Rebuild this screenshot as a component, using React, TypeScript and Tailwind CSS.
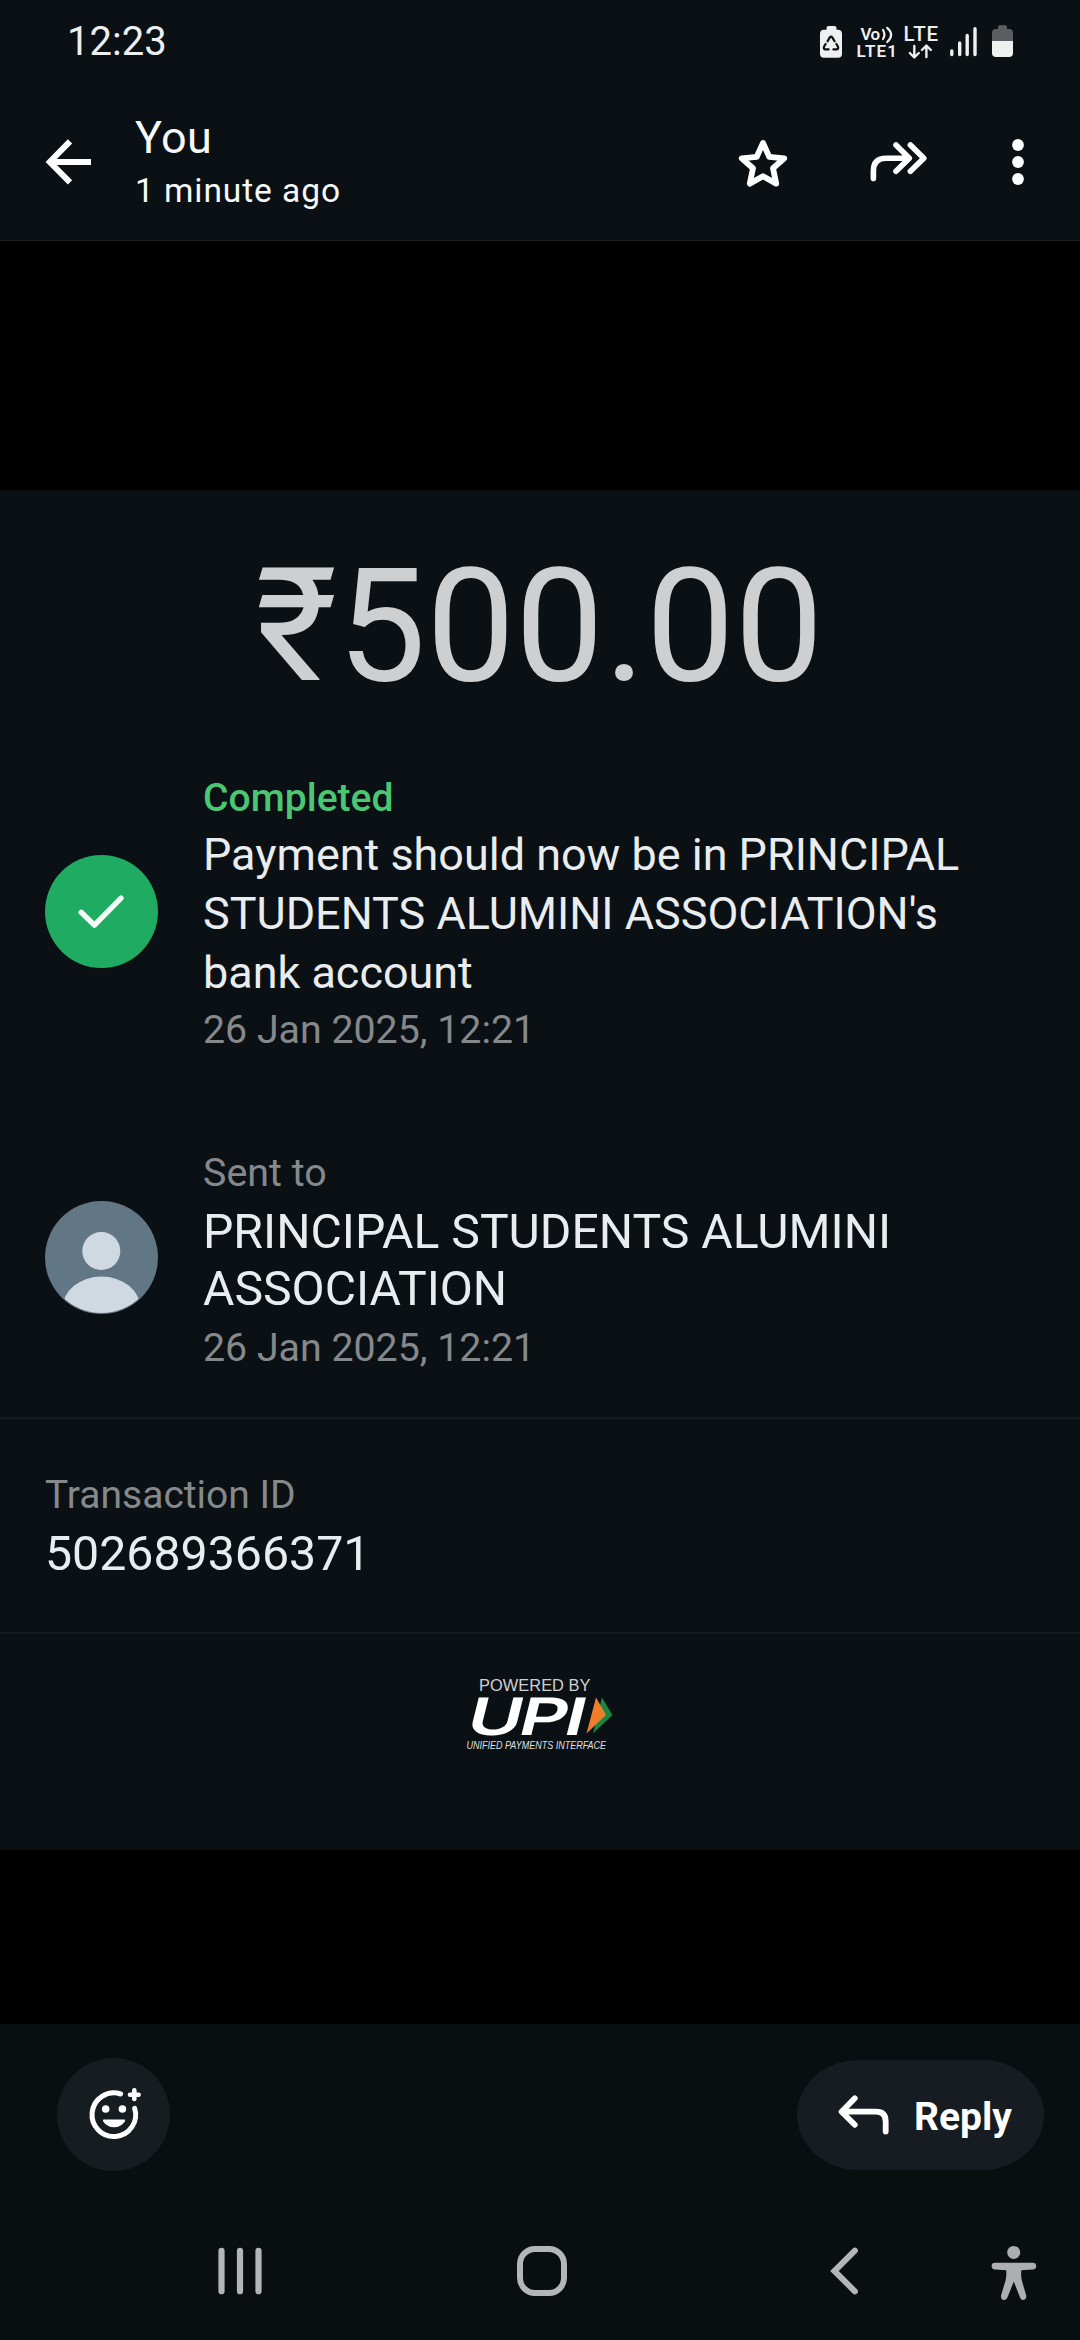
import React from "react";

function StatusIcons() {
  return (
    <svg className="h-[44px] w-[204px]" viewBox="816 20 204 44" fill="none" strokeLinecap="round" strokeLinejoin="round">
      {/* battery protection */}
      <rect x="826.5" y="26" width="10" height="8" rx="2" fill="#eeefef" />
      <rect x="820" y="29.7" width="22" height="28" rx="4" fill="#eeefef" />
      <g stroke="#0b1014" strokeWidth="2.2">
        <path d="M827.6 41.2L829.6 37.6Q831 35.6 832.4 37.6L834.6 41.2" />
        <path d="M825.6 44L824 46.8Q823.2 49.2 825.6 49.4H828.6" />
        <path d="M836.4 44L838 46.8Q838.8 49.2 836.4 49.4H833.4" />
      </g>
      {/* network labels */}
      <g fill="#eeefef" fontFamily="Roboto, sans-serif">
        <text x="860.5" y="39.7" fontSize="17" fontWeight="600" textLength="19.5">Vo</text>
        <text x="856.5" y="57" fontSize="17" fontWeight="600" textLength="40.5">LTE1</text>
        <text x="903.6" y="40.6" fontSize="20.4" fontWeight="500" textLength="34.5">LTE</text>
      </g>
      <g stroke="#eeefef" strokeWidth="2.2">
        <path d="M883 30Q885.8 34.5 883 39" />
        <path d="M887.2 27.8Q895 34.5 887.2 42" />
        <path d="M914.3 46V57M909.8 53L914.3 57.4L918.8 53" strokeWidth="2.4" />
        <path d="M926.4 57V46.4M921.9 50L926.4 45.6L930.9 50" strokeWidth="2.4" />
      </g>
      <g stroke="#eeefef" strokeWidth="3.4">
        <path d="M951.8 51V54.6M959.7 43V54.6M967.2 35.4V54.6M975 28.8V54.6" />
      </g>
      {/* battery level */}
      <path d="M998 29V27Q998 25.3 999.7 25.3H1005.3Q1007 25.3 1007 27V29H1009Q1013 29 1013 33V41H992V33Q992 29 996 29Z" fill="#5b5e60" />
      <path d="M992 41H1013V53Q1013 57 1009 57H996Q992 57 992 53Z" fill="#eeefef" />
    </svg>
  );
}

function Header() {
  return (
    <header className="flex h-[159px] items-start border-b border-[#1c2226]">
      <svg className="mt-[50px] ml-10 h-[60px] w-14" viewBox="40 132 56 60" fill="none" stroke="#fff" strokeWidth="6">
        <path d="M91 162H50M70 141.3L49.8 162L70 182.4" />
      </svg>
      <div className="mt-[30px] ml-[39px] flex w-[599px] flex-col gap-[7px] whitespace-nowrap text-[#f7f8fa]">
        <div className="text-[45px] leading-[52px] tracking-[0.4px]">You</div>
        <div className="text-[33.5px] leading-10 tracking-[0.93px]">1 minute ago</div>
      </div>
      <svg className="mt-[50px] h-[60px] w-[58px]" viewBox="734 132 58 60" fill="none" stroke="#fff" strokeWidth="5.8" strokeLinecap="round" strokeLinejoin="round">
        <path d="M763 143L769.2 156.8L784.3 158.3L773 168.2L776.2 183.6L763 176.2L749.8 183.6L753 168.2L741.7 158.3L756.8 156.8Z" />
      </svg>
      <svg className="mt-[50px] ml-[76px] h-[60px] w-[62px]" viewBox="868 132 62 60" fill="none" stroke="#fff" strokeWidth="5.6" strokeLinecap="round" strokeLinejoin="round">
        <path d="M873.4 178.4V171Q873.4 158.3 886 158.3H908M896 145L909.3 158.3L896 171.3M910.4 145L923.8 158.3L910.4 171.3" />
      </svg>
      <svg className="mt-[50px] ml-[78px] h-[60px] w-5" viewBox="1008 132 20 60" fill="#fff">
        <circle cx="1018" cy="145" r="5.9" />
        <circle cx="1018" cy="162" r="5.9" />
        <circle cx="1018" cy="179" r="5.9" />
      </svg>
    </header>
  );
}

function UpiLogo() {
  return (
    <svg className="mt-9 ml-[450px] h-[90px] w-50" viewBox="450 1670 200 90" fontFamily="'Liberation Sans', Arial, sans-serif">
      <text x="479" y="1691.3" fontSize="16.4" fill="#cfd1d3" textLength="111.5">POWERED BY</text>
      <g transform="translate(469 1735) skewX(-14) scale(1.46 1)">
        <text x="-3.5" y="0" fontFamily="Inter, sans-serif" fontSize="51.5" fontWeight="600" fill="#fff" textLength="81" lengthAdjust="spacing">UPI</text>
      </g>
      <path d="M602 1697.5L612.5 1715L593 1733.5Z" fill="#1c8541" />
      <path d="M596 1697.5L606 1715L586.5 1733.5Z" fill="#ef7d2c" />
      <text x="466.5" y="1749" fontSize="11" fontStyle="italic" fontWeight="400" fill="#dfe1e3" textLength="139.5" lengthAdjust="spacingAndGlyphs">UNIFIED PAYMENTS INTERFACE</text>
    </svg>
  );
}

function Receipt() {
  return (
    <section className="h-[1360px] overflow-hidden bg-[#0b1014] whitespace-nowrap text-[#e9edef]">
      <div className="mt-14 pr-px text-center text-[158.2px] leading-[160px] text-[#cdcfd1]">₹500.00</div>

      <div className="mt-[67px] flex items-start pl-[45px]">
        <svg className="mt-[81.5px] h-[113px] w-[113px]" viewBox="45 854.5 113 113" fill="none">
          <circle cx="101.5" cy="911" r="56.5" fill="#1fab61" />
          <path d="M81.2 911.8L94.4 924.6L121 897.6" stroke="#f2fbf6" strokeWidth="5.4" strokeLinecap="round" strokeLinejoin="round" />
        </svg>
        <div className="ml-[45px]">
          <div className="text-[39.1px] leading-[50px] font-medium text-[#4bc773]">Completed</div>
          <div className="mt-[1.6px] text-[44.95px] leading-[59.3px]">
            Payment should now be in PRINCIPAL
            <br />
            STUDENTS ALUMINI ASSOCIATION's
            <br />
            bank account
          </div>
          <div className="mt-[2.5px] text-[39.3px] leading-[50px] text-[#85898c]">26 Jan 2025, 12:21</div>
        </div>
      </div>

      <div className="mt-[93px] flex items-start pl-[45px]">
        <svg className="mt-[53px] h-[113px] w-[113px]" viewBox="0 0 113 113">
          <defs>
            <clipPath id="avatar">
              <circle cx="56.5" cy="56.5" r="55.5" />
            </clipPath>
          </defs>
          <circle cx="56.5" cy="56.5" r="56.5" fill="#627785" />
          <circle cx="56.3" cy="50" r="19" fill="#d0d9e1" />
          <ellipse cx="56.5" cy="107.5" rx="39" ry="32" fill="#d0d9e1" clipPath="url(#avatar)" />
        </svg>
        <div className="ml-[45px]">
          <div className="text-[39.4px] leading-[50px] text-[#85898c]">Sent to</div>
          <div className="mt-[5px] text-[48.15px] leading-[57px]">
            PRINCIPAL STUDENTS ALUMINI
            <br />
            ASSOCIATION
          </div>
          <div className="mt-[6px] text-[39.3px] leading-[50px] text-[#85898c]">26 Jan 2025, 12:21</div>
        </div>
      </div>

      <div className="mt-[44.3px] h-[2px] bg-[#151a1e]" />

      <div className="mt-[51.2px] pl-[45px]">
        <div className="text-[39px] leading-[50px] text-[#85898c]">Transaction ID</div>
        <div className="mt-[5px] text-[48.25px] leading-[57px]">502689366371</div>
      </div>

      <div className="mt-[49.8px] h-[2px] bg-[#151a1e]" />
      <UpiLogo />
    </section>
  );
}

function Actions() {
  return (
    <div className="flex h-[206px] items-start">
      <button className="mt-[34px] ml-[57px] h-[113px] w-[113px] rounded-full bg-[#161d20]">
        <svg className="h-[113px] w-[113px]" viewBox="57 2058 113 113" fill="none" stroke="#fff" strokeWidth="5" strokeLinecap="round">
          <path d="M120.6 2094A21.8 21.8 0 1 0 134.7 2108.4" />
          <path d="M134.3 2090.4V2099M130 2094.7H138.6" strokeWidth="4.6" />
          <g fill="#fff" stroke="none">
            <circle cx="105.7" cy="2109" r="3.8" />
            <circle cx="122.4" cy="2109" r="3.8" />
            <path d="M103.6 2119.6H124.4Q125.8 2119.8 124.8 2121.4Q121 2127.2 114 2127.2Q107 2127.2 103.2 2121.4Q102.2 2119.8 103.6 2119.6Z" />
          </g>
        </svg>
      </button>
      <button className="mt-9 ml-[627px] flex h-[110px] w-[247px] items-start rounded-[62px/55px] bg-[#171c22]">
        <svg className="mt-[30px] ml-[37px] h-[50px] w-[60px]" viewBox="834 2090 60 50" fill="none" stroke="#fff" strokeWidth="5.8" strokeLinecap="round" strokeLinejoin="round">
          <path d="M854.8 2098.3L841.6 2111.7L854.8 2124.8M842 2111.7H876Q885.7 2111.7 885.7 2121.4V2131.6" />
        </svg>
        <span className="mt-[32px] ml-5 text-[39px] leading-[50px] font-bold text-white">Reply</span>
      </button>
    </div>
  );
}

function NavBar() {
  return (
    <nav className="flex h-[110px] items-start text-[#b4b5b7]">
      <svg className="mt-[11px] ml-[210px] h-[60px] w-[60px]" viewBox="210 2241 60 60" stroke="currentColor" strokeWidth="6.2" strokeLinecap="round">
        <path d="M221.5 2250.8V2291.2M240 2250.8V2291.2M258.5 2250.8V2291.2" />
      </svg>
      <div className="mt-[15.5px] ml-[247px] h-[50px] w-[50px] rounded-[18px] border-[6.5px] border-[#b4b5b7]" />
      <svg className="mt-[11px] ml-[253px] h-[60px] w-10" viewBox="820 2241 40 60" fill="none" stroke="currentColor" strokeWidth="6" strokeLinecap="round">
        <path d="M854.9 2250.6L834.4 2271L854.9 2291.4" />
      </svg>
      <svg className="mt-[11px] ml-[126px] h-[66px] w-14" viewBox="986 2241 56 66" fill="#adaeb0">
        <circle cx="1013.7" cy="2252.4" r="6.5" />
        <path d="M995 2262.7H1032.8A3.4 3.4 0 0 1 1032.8 2269.5L1021.4 2270.2Q1020.6 2276 1022 2281L1026.2 2295.6Q1026.7 2299.4 1023.6 2300Q1021 2300.2 1020 2297.4L1013.8 2281.6L1007.4 2297.4Q1006.2 2300.4 1003.4 2300Q1000.6 2299.2 1001 2295.6L1005.4 2281Q1006.8 2276 1006.2 2270.2L995 2269.5A3.4 3.4 0 0 1 995 2262.7Z" />
      </svg>
    </nav>
  );
}

export default function App() {
  return (
    <div className="flex h-[2340px] w-[1080px] flex-col overflow-hidden bg-black font-['Roboto',sans-serif]">
      <div className="bg-[#0b1014]">
        <div className="flex h-[82px] items-start justify-between pr-[60px] pl-[67px]">
          <span className="mt-[22px] text-[40px] leading-10 text-[#eeefef]">12:23</span>
          <div className="mt-5">
            <StatusIcons />
          </div>
        </div>
        <Header />
      </div>
      <main className="h-[1783px] bg-black pt-[249px]">
        <Receipt />
      </main>
      <footer className="h-[316px] bg-[#090e11]">
        <Actions />
        <NavBar />
      </footer>
    </div>
  );
}
